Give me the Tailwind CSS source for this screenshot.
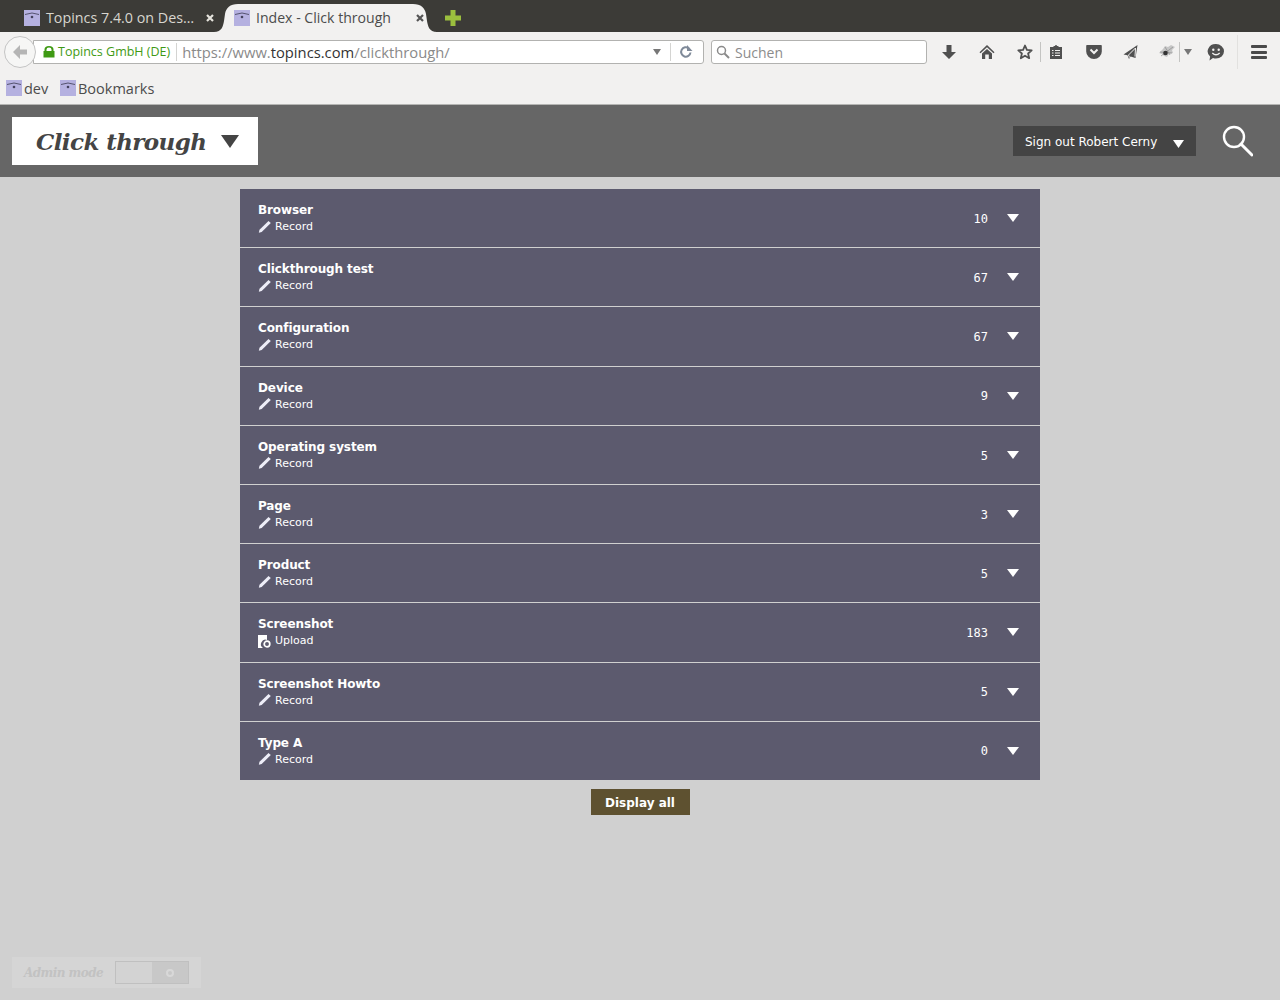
<!DOCTYPE html>
<html lang="en">
  <head>
    <meta charset="UTF-8" />
    <title>Index - Click through</title>
    <script src="https://cdn.jsdelivr.net/npm/@tailwindcss/browser@4"></script>
  </head>
  <body class="h-[1000px] overflow-hidden bg-[#d0d0d0] font-['DejaVu_Sans',sans-serif]">
    <!-- tab bar -->
    <div class="flex h-8 items-center bg-[#3c3b37] pt-1 pl-6 font-['Open_Sans',sans-serif] text-[14.300px]">
      <svg class="h-4 w-4 shrink-0" viewBox="0 0 16 16"><rect width="16" height="16" fill="#b5b1e0" /><path d="M1 4.500Q8 1.500 15 4.500" fill="none" stroke="#55536f" /><circle cx="8" cy="7" r="1.300" fill="#44425c" /></svg>
      <span class="ml-1.5 w-[150px] whitespace-nowrap text-[#d8d6cf]">Topincs 7.4.0 on Des…</span>
      <svg class="ml-[10px] h-2 w-2 shrink-0" viewBox="0 0 8 8"><path d="m1 1 6 6M7 1 1 7" stroke="#e6e4dd" stroke-width="2.200" /></svg>
      <div class="relative flex h-[28px] w-[223px] shrink-0 items-center self-end pl-5">
        <svg class="absolute inset-0 h-[28px] w-[223px]" viewBox="0 0 223 28"><path d="M0 28C8 28 9 22 10 17L11 10C12 4 16 0 24 0H199C207 0 211 4 212 10L213 17C214 22 215 28 223 28Z" fill="#f2f1f0" /></svg>
        <svg class="relative h-4 w-4 shrink-0" viewBox="0 0 16 16"><rect width="16" height="16" fill="#b5b1e0" /><path d="M1 4.500Q8 1.500 15 4.500" fill="none" stroke="#55536f" /><circle cx="8" cy="7" r="1.300" fill="#44425c" /></svg>
        <span class="relative ml-1.5 w-[160px] text-[14.100px] whitespace-nowrap text-[#4c4c4c]">Index - Click through</span>
        <svg class="relative h-2 w-2 shrink-0" viewBox="0 0 8 8"><path d="m1 1 6 6M7 1 1 7" stroke="#555" stroke-width="2.200" /></svg>
      </div>
      <svg class="ml-2 h-4 w-4 shrink-0" viewBox="0 0 16 16"><path d="M5.500 0h5v5.500H16v5h-5.500V16h-5v-5.500H0v-5h5.500z" fill="#9bbf3e" /></svg>
    </div>

    <!-- nav toolbar -->
    <div class="relative flex h-[40px] items-center bg-[#f2f1f0] pl-[33px] font-['Open_Sans',sans-serif]">
      <div class="absolute top-[4px] left-[4px] z-10 flex h-[32px] w-[32px] items-center justify-center rounded-full border border-[#c4c4c4] bg-[#f6f6f5]">
        <svg class="h-4 w-4" viewBox="0 0 16 16"><path d="M8 1 1 8l7 7V10.500h7v-5H8z" fill="#b5b5b5" /></svg>
      </div>
      <div class="flex h-[24px] w-[671px] items-center rounded-r-[3px] border border-[#b2b2b0] bg-white pl-[9px]">
        <svg class="h-3 w-3 shrink-0" viewBox="0 0 12 12"><path d="M1.500 5V3.600a4.500 3.600 0 0 1 9 0V5h1v6.500H.5V5zM3.500 5h5V3.600a2.500 2 0 0 0-5 0z" fill="#3f9a14" /></svg>
        <span class="ml-[3px] pt-px text-[12.500px] text-[#3f9a14]">Topincs GmbH (DE)</span>
        <span class="mr-[5px] ml-[6px] h-[18px] w-px bg-[#d4d4d2]"></span>
        <span class="w-[464px] pt-px text-[14.750px] whitespace-nowrap text-[#8a8a8a]">https://www.<span class="text-[#333]">topincs.com</span>/clickthrough/</span>
        <svg class="ml-auto h-2 w-2.5" viewBox="0 0 10 8"><path d="M1 1h8L5 7z" fill="#777" /></svg>
        <span class="mx-[8px] h-[18px] w-px bg-[#d4d4d2]"></span>
        <svg class="mr-[10px] h-[14px] w-[14px]" viewBox="0 0 14 14"><path d="M11.500 7.500A4.700 4.700 0 1 1 9.800 3.300" fill="none" stroke="#7f8a99" stroke-width="2" /><path d="M8 0v6h5.500z" fill="#7f8a99" /></svg>
      </div>
      <div class="ml-[7px] flex h-[24px] w-[216px] items-center rounded-[3px] border border-[#b2b2b0] bg-white pl-1 text-[14px] text-[#8c8c8c]">
        <svg class="h-[14px] w-[14px]" viewBox="0 0 14 14"><circle cx="5.500" cy="5.500" r="4" fill="none" stroke="#8a8a8a" stroke-width="1.500" /><path d="m8.500 8.500 4.500 4.500" stroke="#8a8a8a" stroke-width="2" /></svg>
        <span class="ml-[5px]">Suchen</span>
      </div>
      <svg class="ml-[14px] h-4 w-4" viewBox="0 0 16 16"><path d="M5.500 1h5v7H15l-7 7-7-7h4.500z" fill="#505050" /></svg>
      <svg class="ml-[22px] h-4 w-4" viewBox="0 0 16 16"><path d="M8 1 .5 8.200 1.500 9.300 8 3.200l6.500 6.100 1-1.100zM3 9.500 8 5l5 4.500V15H9.800v-4.500H6.200V15H3z" fill="#505050" /></svg>
      <svg class="ml-[22px] h-4 w-4" viewBox="0 0 16 16"><path d="m8 1.500 1.900 4.400 4.800.4-3.600 3.200 1.100 4.700L8 11.700l-4.200 2.500 1.100-4.700-3.600-3.200 4.800-.4z" fill="none" stroke="#505050" stroke-width="1.800" stroke-linejoin="round" /></svg>
      <span class="ml-[7px] h-[20px] w-px bg-[#c4c4c2]"></span>
      <svg class="ml-[7px] h-4 w-4" viewBox="0 0 16 16"><path d="M2 3h3.500V2H7a1 1 0 0 1 2 0h1.500v1H14v12H2z" fill="#505050" /><path d="M4 6.500h1.500M7 6.500h5M4 9h1.500M7 9h5M4 11.500h1.500M7 11.500h5" stroke="#f2f1f0" stroke-width="1.200" /></svg>
      <svg class="ml-[22px] h-4 w-4" viewBox="0 0 16 16"><path d="M1 1h14a.8.8 0 0 1 .8.800V7.500a7.800 7.500 0 0 1-15.600 0V1.800A.8.8 0 0 1 1 1z" fill="#505050" /><path d="m4.500 5.500 3.500 3.500 3.500-3.500" fill="none" stroke="#f2f1f0" stroke-width="2" /></svg>
      <svg class="ml-[21px] h-4 w-4" viewBox="0 0 16 16"><path d="M14.500 1 .5 10.500l4 .8L6 15l1.500-2.500 5 1.500z" fill="#505050" /><path d="M12.500 4 5.500 11l1 2.500M12.500 4l-.5 8.500" fill="none" stroke="#f2f1f0" stroke-width="1" /></svg>
      <svg class="ml-[20px] h-4 w-4" viewBox="0 0 16 16"><path d="M0 9l4-4 2-3 3 1 3-2 4 2-3 3 1 3-4 1-2 3-3-1-2-2z" fill="#c6c6c6" /><path d="M2 12 14 3M6 3l5 8M1 8l12 1" stroke="#8c8c8c" stroke-width=".7" /><circle cx="6.500" cy="9" r="2.300" fill="#333" /></svg>
      <span class="ml-[4px] h-[20px] w-px bg-[#c4c4c2]"></span>
      <svg class="ml-[3px] h-2 w-2.5" viewBox="0 0 10 8"><path d="M1 1h8L5 7z" fill="#777" /></svg>
      <svg class="ml-[14px] h-[18px] w-[18px]" viewBox="0 0 18 18"><path d="M9 1a8 7.300 0 0 1 0 14.600c-1 0-2-.2-3-.6L2.500 17.500l.6-4A8 7.300 0 0 1 9 1z" fill="#505050" /><circle cx="6.300" cy="6.800" r="1.200" fill="#f2f1f0" /><circle cx="11.700" cy="6.800" r="1.200" fill="#f2f1f0" /><path d="M5.300 10Q9 13.500 12.700 10" fill="none" stroke="#f2f1f0" stroke-width="1.300" /></svg>
      <span class="ml-[12px] h-[34px] w-px bg-[#e2e1df]"></span>
      <div class="ml-[13px] flex h-[14px] w-4 flex-col justify-between">
        <span class="h-[3px] rounded-[1px] bg-[#4a4a4a]"></span>
        <span class="h-[3px] rounded-[1px] bg-[#4a4a4a]"></span>
        <span class="h-[3px] rounded-[1px] bg-[#4a4a4a]"></span>
      </div>
    </div>

    <!-- bookmarks -->
    <div class="flex h-[33px] items-center border-b border-[#b5b5b3] bg-[#f2f1f0] pl-[6px] font-['Open_Sans',sans-serif] text-[14.500px] text-[#4c4c4c]">
      <svg class="h-4 w-4" viewBox="0 0 16 16"><rect width="16" height="16" fill="#b5b1e0" /><path d="M1 4.500Q8 1.500 15 4.500" fill="none" stroke="#55536f" /><circle cx="8" cy="7" r="1.300" fill="#44425c" /></svg>
      <span class="ml-[2px] w-[36px] pt-px">dev</span>
      <svg class="h-4 w-4" viewBox="0 0 16 16"><rect width="16" height="16" fill="#b5b1e0" /><path d="M1 4.500Q8 1.500 15 4.500" fill="none" stroke="#55536f" /><circle cx="8" cy="7" r="1.300" fill="#44425c" /></svg>
      <span class="ml-[2px] pt-px">Bookmarks</span>
    </div>

    <!-- page header -->
    <header class="flex h-[72px] items-center bg-[#666666] pr-[27px] pl-3">
      <div class="flex h-12 w-[246px] items-center bg-white pl-6">
        <span class="pt-[2px] font-['DejaVu_Serif',serif] text-[23px] font-bold tracking-[-0.6px] whitespace-nowrap text-[#444] italic">Click through</span>
        <svg class="mr-[19px] ml-auto h-[13px] w-[18px]" viewBox="0 0 18 13"><path d="M0 0h18L9 13z" fill="#444" /></svg>
      </div>
      <div class="ml-auto flex h-[30px] w-[183px] items-center bg-[#444444] pl-3 text-[12px] text-white">
        <span class="pt-[2px] whitespace-nowrap">Sign out Robert Cerny</span>
        <svg class="mt-[6px] mr-3 ml-auto h-2 w-[11px]" viewBox="0 0 11 8"><path d="M0 0h11L5.500 8z" fill="#fff" /></svg>
      </div>
      <svg class="ml-[25px] h-8 w-8" viewBox="0 0 32 32"><circle cx="13" cy="12" r="10" fill="none" stroke="#fff" stroke-width="2.400" /><path d="m20 19 11 11" stroke="#fff" stroke-width="3" stroke-linecap="round" /></svg>
    </header>

    <!-- facet list -->
    <main class="mx-auto mt-3 w-[800px]">
      <ul class="bg-[#5c5a6e] text-white">
        <li class="flex h-[59.200px] items-center border-b border-[#d0d0d0] pr-[21px] pl-[18px]">
          <div class="min-w-0 flex-1 pt-px">
            <div class="text-[12px] leading-[16px] font-bold tracking-[-0.1px]">Browser</div>
            <div class="mt-px flex h-[16px] items-center text-[11px] leading-[16px]">
              <svg class="mr-1 h-[13px] w-[13px]" viewBox="0 0 13 13"><path d="M.8 11.800 1.500 8.800 10.500 0 12.800 2 3.700 11z" fill="#eeeef8" /></svg>Record
            </div>
          </div>
          <span class="pt-[1.400px] font-['DejaVu_Sans_Mono',monospace] text-[12px]">10</span>
          <svg class="ml-[19px] h-2 w-3" viewBox="0 0 12 8"><path d="M0 0h12L6 8z" fill="#fff" /></svg>
        </li>
        <li class="flex h-[59.200px] items-center border-b border-[#d0d0d0] pr-[21px] pl-[18px]">
          <div class="min-w-0 flex-1 pt-px">
            <div class="text-[12px] leading-[16px] font-bold tracking-[-0.1px]">Clickthrough test</div>
            <div class="mt-px flex h-[16px] items-center text-[11px] leading-[16px]">
              <svg class="mr-1 h-[13px] w-[13px]" viewBox="0 0 13 13"><path d="M.8 11.800 1.500 8.800 10.500 0 12.800 2 3.700 11z" fill="#eeeef8" /></svg>Record
            </div>
          </div>
          <span class="pt-[1.400px] font-['DejaVu_Sans_Mono',monospace] text-[12px]">67</span>
          <svg class="ml-[19px] h-2 w-3" viewBox="0 0 12 8"><path d="M0 0h12L6 8z" fill="#fff" /></svg>
        </li>
        <li class="flex h-[59.200px] items-center border-b border-[#d0d0d0] pr-[21px] pl-[18px]">
          <div class="min-w-0 flex-1 pt-px">
            <div class="text-[12px] leading-[16px] font-bold tracking-[-0.1px]">Configuration</div>
            <div class="mt-px flex h-[16px] items-center text-[11px] leading-[16px]">
              <svg class="mr-1 h-[13px] w-[13px]" viewBox="0 0 13 13"><path d="M.8 11.800 1.500 8.800 10.500 0 12.800 2 3.700 11z" fill="#eeeef8" /></svg>Record
            </div>
          </div>
          <span class="pt-[1.400px] font-['DejaVu_Sans_Mono',monospace] text-[12px]">67</span>
          <svg class="ml-[19px] h-2 w-3" viewBox="0 0 12 8"><path d="M0 0h12L6 8z" fill="#fff" /></svg>
        </li>
        <li class="flex h-[59.200px] items-center border-b border-[#d0d0d0] pr-[21px] pl-[18px]">
          <div class="min-w-0 flex-1 pt-px">
            <div class="text-[12px] leading-[16px] font-bold tracking-[-0.1px]">Device</div>
            <div class="mt-px flex h-[16px] items-center text-[11px] leading-[16px]">
              <svg class="mr-1 h-[13px] w-[13px]" viewBox="0 0 13 13"><path d="M.8 11.800 1.500 8.800 10.500 0 12.800 2 3.700 11z" fill="#eeeef8" /></svg>Record
            </div>
          </div>
          <span class="pt-[1.400px] font-['DejaVu_Sans_Mono',monospace] text-[12px]">9</span>
          <svg class="ml-[19px] h-2 w-3" viewBox="0 0 12 8"><path d="M0 0h12L6 8z" fill="#fff" /></svg>
        </li>
        <li class="flex h-[59.200px] items-center border-b border-[#d0d0d0] pr-[21px] pl-[18px]">
          <div class="min-w-0 flex-1 pt-px">
            <div class="text-[12px] leading-[16px] font-bold tracking-[-0.1px]">Operating system</div>
            <div class="mt-px flex h-[16px] items-center text-[11px] leading-[16px]">
              <svg class="mr-1 h-[13px] w-[13px]" viewBox="0 0 13 13"><path d="M.8 11.800 1.500 8.800 10.500 0 12.800 2 3.700 11z" fill="#eeeef8" /></svg>Record
            </div>
          </div>
          <span class="pt-[1.400px] font-['DejaVu_Sans_Mono',monospace] text-[12px]">5</span>
          <svg class="ml-[19px] h-2 w-3" viewBox="0 0 12 8"><path d="M0 0h12L6 8z" fill="#fff" /></svg>
        </li>
        <li class="flex h-[59.200px] items-center border-b border-[#d0d0d0] pr-[21px] pl-[18px]">
          <div class="min-w-0 flex-1 pt-px">
            <div class="text-[12px] leading-[16px] font-bold tracking-[-0.1px]">Page</div>
            <div class="mt-px flex h-[16px] items-center text-[11px] leading-[16px]">
              <svg class="mr-1 h-[13px] w-[13px]" viewBox="0 0 13 13"><path d="M.8 11.800 1.500 8.800 10.500 0 12.800 2 3.700 11z" fill="#eeeef8" /></svg>Record
            </div>
          </div>
          <span class="pt-[1.400px] font-['DejaVu_Sans_Mono',monospace] text-[12px]">3</span>
          <svg class="ml-[19px] h-2 w-3" viewBox="0 0 12 8"><path d="M0 0h12L6 8z" fill="#fff" /></svg>
        </li>
        <li class="flex h-[59.200px] items-center border-b border-[#d0d0d0] pr-[21px] pl-[18px]">
          <div class="min-w-0 flex-1 pt-px">
            <div class="text-[12px] leading-[16px] font-bold tracking-[-0.1px]">Product</div>
            <div class="mt-px flex h-[16px] items-center text-[11px] leading-[16px]">
              <svg class="mr-1 h-[13px] w-[13px]" viewBox="0 0 13 13"><path d="M.8 11.800 1.500 8.800 10.500 0 12.800 2 3.700 11z" fill="#eeeef8" /></svg>Record
            </div>
          </div>
          <span class="pt-[1.400px] font-['DejaVu_Sans_Mono',monospace] text-[12px]">5</span>
          <svg class="ml-[19px] h-2 w-3" viewBox="0 0 12 8"><path d="M0 0h12L6 8z" fill="#fff" /></svg>
        </li>
        <li class="flex h-[59.200px] items-center border-b border-[#d0d0d0] pr-[21px] pl-[18px]">
          <div class="min-w-0 flex-1 pt-px">
            <div class="text-[12px] leading-[16px] font-bold tracking-[-0.1px]">Screenshot</div>
            <div class="mt-px flex h-[16px] items-center text-[11px] leading-[16px]">
              <svg class="mr-1 h-[13px] w-[13px]" viewBox="0 0 13 13"><path d="M0 0h9v5a4.500 4.500 0 0 0-4 8H0z" fill="#fff" /><circle cx="9" cy="9" r="2.800" fill="none" stroke="#fff" stroke-width="1.700" /></svg>Upload
            </div>
          </div>
          <span class="pt-[1.400px] font-['DejaVu_Sans_Mono',monospace] text-[12px]">183</span>
          <svg class="ml-[19px] h-2 w-3" viewBox="0 0 12 8"><path d="M0 0h12L6 8z" fill="#fff" /></svg>
        </li>
        <li class="flex h-[59.200px] items-center border-b border-[#d0d0d0] pr-[21px] pl-[18px]">
          <div class="min-w-0 flex-1 pt-px">
            <div class="text-[12px] leading-[16px] font-bold tracking-[-0.1px]">Screenshot Howto</div>
            <div class="mt-px flex h-[16px] items-center text-[11px] leading-[16px]">
              <svg class="mr-1 h-[13px] w-[13px]" viewBox="0 0 13 13"><path d="M.8 11.800 1.500 8.800 10.500 0 12.800 2 3.700 11z" fill="#eeeef8" /></svg>Record
            </div>
          </div>
          <span class="pt-[1.400px] font-['DejaVu_Sans_Mono',monospace] text-[12px]">5</span>
          <svg class="ml-[19px] h-2 w-3" viewBox="0 0 12 8"><path d="M0 0h12L6 8z" fill="#fff" /></svg>
        </li>
        <li class="flex h-[58.200px] items-center pr-[21px] pl-[18px]">
          <div class="min-w-0 flex-1 pt-px">
            <div class="text-[12px] leading-[16px] font-bold tracking-[-0.1px]">Type A</div>
            <div class="mt-px flex h-[16px] items-center text-[11px] leading-[16px]">
              <svg class="mr-1 h-[13px] w-[13px]" viewBox="0 0 13 13"><path d="M.8 11.800 1.500 8.800 10.500 0 12.800 2 3.700 11z" fill="#eeeef8" /></svg>Record
            </div>
          </div>
          <span class="pt-[1.400px] font-['DejaVu_Sans_Mono',monospace] text-[12px]">0</span>
          <svg class="ml-[19px] h-2 w-3" viewBox="0 0 12 8"><path d="M0 0h12L6 8z" fill="#fff" /></svg>
        </li>
      </ul>
      <div class="mt-[9px] flex justify-center">
        <button class="h-[26px] w-[99px] bg-[#5e5130] pt-[2px] text-[12px] font-bold text-white">Display all</button>
      </div>
    </main>

    <!-- admin toggle, floats over the page -->
    <div class="fixed bottom-3 left-3 flex h-[31px] w-[189px] items-center bg-[#d5d5d5] pl-3">
      <span class="font-['DejaVu_Serif',serif] text-[12px] font-bold tracking-[-0.55px] whitespace-nowrap text-[#c2c2c2] italic">Admin mode</span>
      <div class="mr-3 ml-auto flex h-[23px] w-[74px] border border-[#c0c0c0]">
        <span class="flex-1 bg-[#d3d3d3]"></span>
        <span class="flex w-9 items-center justify-center bg-[#c8c8c8]">
          <span class="h-2 w-2 rounded-full border-2 border-[#d8d8d8]"></span>
        </span>
      </div>
    </div>
  </body>
</html>
